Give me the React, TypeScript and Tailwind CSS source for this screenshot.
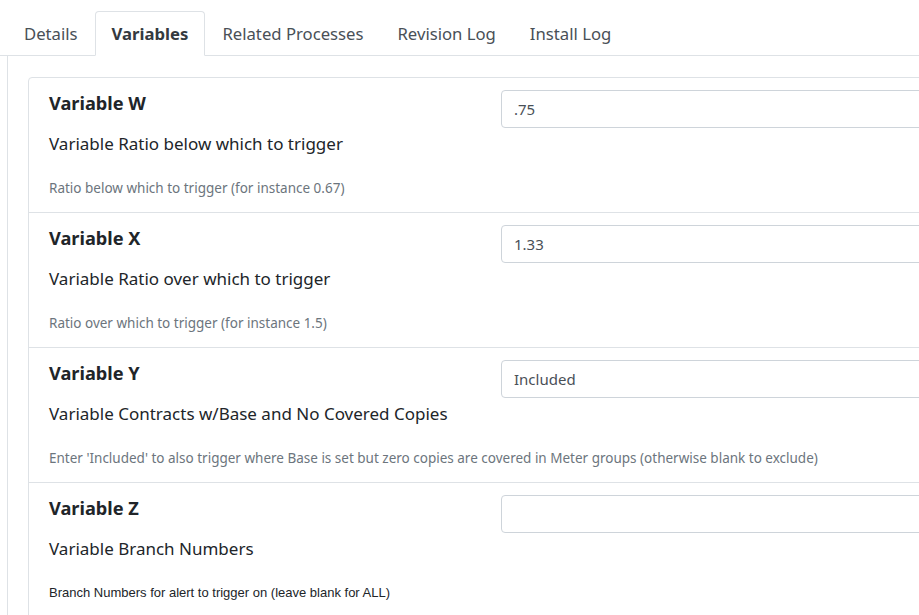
import { useState } from 'react'

interface Variable {
  id: string
  title: string
  label: string
  help: string
  value: string
  plainHelp?: boolean
}

const variables: Variable[] = [
  {
    id: 'w',
    title: 'Variable W',
    label: 'Variable Ratio below which to trigger',
    help: 'Ratio below which to trigger (for instance 0.67)',
    value: '.75',
  },
  {
    id: 'x',
    title: 'Variable X',
    label: 'Variable Ratio over which to trigger',
    help: 'Ratio over which to trigger (for instance 1.5)',
    value: '1.33',
  },
  {
    id: 'y',
    title: 'Variable Y',
    label: 'Variable Contracts w/Base and No Covered Copies',
    help: "Enter 'Included' to also trigger where Base is set but zero copies are covered in Meter groups (otherwise blank to exclude)",
    value: 'Included',
  },
  {
    id: 'z',
    title: 'Variable Z',
    label: 'Variable Branch Numbers',
    help: 'Branch Numbers for alert to trigger on (leave blank for ALL)',
    value: '',
    plainHelp: true,
  },
]

const tabs = ['Details', 'Variables', 'Related Processes', 'Revision Log', 'Install Log']

export default function App() {
  const [activeTab, setActiveTab] = useState('Variables')
  const [values, setValues] = useState<Record<string, string>>(
    Object.fromEntries(variables.map(v => [v.id, v.value]))
  )

  return (
    <div className="w-[919px] h-[615px] overflow-hidden bg-white font-['Noto_Sans',sans-serif] text-[#212529]">
      <div className="w-[1300px] pt-[11px]">
        {/* Tabs */}
        <div className="flex pl-[7px] border-b border-[#dee2e6]">
          {tabs.map(tab => (
            <button
              key={tab}
              onClick={() => setActiveTab(tab)}
              className={`px-[16px] h-[45px] -mb-[1px] text-[16.7px] rounded-t-[4px] border ${
                activeTab === tab
                  ? 'bg-white border-[#dee2e6] border-b-white font-bold text-[#343a40]'
                  : 'border-transparent text-[#495057]'
              }`}
            >
              {tab}
            </button>
          ))}
        </div>

        {/* Panel */}
        <div className="ml-[7px] border-l border-[#dee2e6] pt-[21px] pl-[20px] min-h-[600px]">
          <div className="border border-[#dee2e6] rounded-[4px]">
            {variables.map(v => (
              <div key={v.id} className="flex border-b border-[#dee2e6] h-[135px] pl-[20px] pt-[12px]">
                <div className="w-[452px] shrink-0">
                  <h5 className="text-[18.2px] leading-[27px] font-bold">{v.title}</h5>
                  <p className="mt-[14px] text-[17px] leading-[26px]">{v.label}</p>
                  <p
                    className={`mt-[21px] leading-[20px] whitespace-nowrap ${
                      v.plainHelp
                        ? "font-['Liberation_Sans',sans-serif] text-[13px] text-[#212529]"
                        : 'text-[13.5px] text-[#6c757d]'
                    }`}
                  >
                    {v.help}
                  </p>
                </div>
                <div className="w-[600px]">
                  <input
                    value={values[v.id]}
                    onChange={e => setValues({ ...values, [v.id]: e.target.value })}
                    className="w-full h-[38px] px-[12px] border border-[#ced4da] rounded-[4px] text-[15px] text-[#495057] outline-none"
                  />
                </div>
              </div>
            ))}
          </div>
        </div>
      </div>
    </div>
  )
}
